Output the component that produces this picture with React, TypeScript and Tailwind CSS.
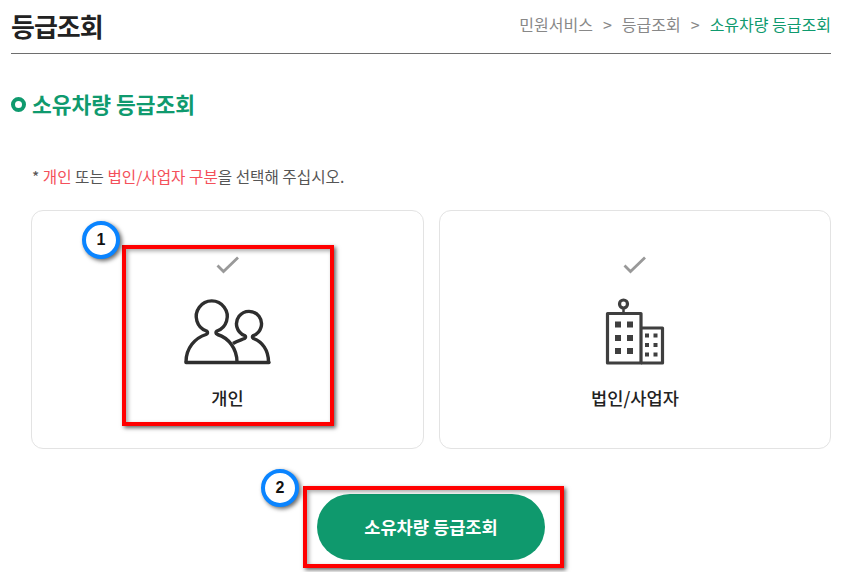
const FONT = "font-['Noto_Sans_CJK_KR','Noto_Sans','Liberation_Sans',sans-serif]";

function Check() {
  return (
    <svg width="24" height="18" viewBox="0 0 24 18" fill="none" className="block">
      <path d="M1.5 9.5 L7.5 15.5 L22 1.5" stroke="#999" strokeWidth="2.8" />
    </svg>
  );
}

function People() {
  return (
    <svg width="88" height="68" viewBox="184 298 88 68" fill="none" stroke="#2e2e2e" strokeWidth="3.4" className="block">
      <path d="M186 362.5 H269" strokeLinecap="round" />
      <path d="M186 362 C186 348 195 338 206 334.5 C208 333.5 208 332 206.5 331 A15.5 15.5 0 1 1 217 331 C215.5 332 215.5 333.5 217.5 334.5 C229 338 237 349 237 362" strokeLinejoin="round" />
      <path d="M233 343.5 C237 341 241 340 244.5 338.5 C246 337.5 246 336.5 244.5 335.5 A12.5 12.5 0 1 1 253.5 335.5 C252 336.5 252 337.5 253.5 338.5 C262 341.5 268.5 350 268.5 362" strokeLinejoin="round" />
    </svg>
  );
}

function Building() {
  return (
    <svg width="60" height="68" viewBox="605 299 60 68" fill="#3f3f3f" className="block">
      <circle cx="623.5" cy="305" r="4" fill="none" stroke="#3f3f3f" strokeWidth="3.2" />
      <path d="M623.5 309 V314" stroke="#3f3f3f" strokeWidth="2.5" />
      <path d="M607.5 364 V314.5 H641 V364 Z" fill="none" stroke="#3f3f3f" strokeWidth="3.2" strokeLinejoin="round" />
      <path d="M641 329 H662.5 V364 H641" fill="none" stroke="#3f3f3f" strokeWidth="3.2" strokeLinejoin="round" />
      <rect x="615" y="322.5" width="6" height="6" />
      <rect x="627" y="322.5" width="6" height="6" />
      <rect x="615" y="336" width="6" height="6" />
      <rect x="627" y="336" width="6" height="6" />
      <rect x="615" y="349" width="6" height="6" />
      <rect x="627" y="349" width="6" height="6" />
      <rect x="645" y="334.5" width="4" height="4" />
      <rect x="653.5" y="334.5" width="4" height="4" />
      <rect x="645" y="344" width="4" height="4" />
      <rect x="653.5" y="344" width="4" height="4" />
      <rect x="645" y="353.5" width="4" height="4" />
      <rect x="653.5" y="353.5" width="4" height="4" />
    </svg>
  );
}

function Card({ label, children }: { label: string; children: React.ReactNode }) {
  return (
    <div className="flex h-[239px] flex-col items-center rounded-[12px] border border-[#e3e3e3] bg-white pt-[45px]">
      <Check />
      <div className="mt-[24px] flex h-[68px] items-center">{children}</div>
      <div className="mt-[19px] text-[17.6px] font-medium leading-[26px] text-[#222]">{label}</div>
    </div>
  );
}

function Badge({ n, className }: { n: string; className: string }) {
  return (
    <div
      className={`absolute flex h-[38px] w-[38px] items-center justify-center rounded-full border-[4px] border-[#0a84ff] bg-white font-['Liberation_Sans',sans-serif] text-[16px] font-bold text-[#111] shadow-[2px_2px_4px_rgba(0,0,0,0.6)] ${className}`}
    >
      {n}
    </div>
  );
}

export default function App() {
  return (
    <div className={`relative h-[572px] w-[847px] overflow-hidden bg-white ${FONT}`}>
      <div className="ml-[11px] mr-[16px] flex h-[54px] items-start justify-between border-b border-[#6e6e6e]">
        <h1 className="mt-[8px] text-[26px] font-bold leading-[36px] tracking-[-1px] text-[#222]">등급조회</h1>
        <div className="mt-[13px] flex gap-[10px] text-[16px] leading-[22px] text-[#888]">
          <span>민원서비스</span>
          <span>&gt;</span>
          <span>등급조회</span>
          <span>&gt;</span>
          <span className="text-[#0f9a6e]">소유차량 등급조회</span>
        </div>
      </div>

      <div className="ml-[11px] mt-[35px] flex h-[30px] items-center gap-[6px]">
        <span className="h-[15px] w-[15px] rounded-full border-[4.5px] border-[#0f9a6e]" />
        <h2 className="text-[21.5px] font-bold leading-[30px] text-[#0f9a6e]">소유차량 등급조회</h2>
      </div>

      <p className="ml-[32px] mt-[47px] text-[15.65px] leading-[22px] text-[#555]">
        * <span className="text-[#f4505a]">개인</span> 또는{" "}
        <span className="text-[#f4505a]">법인/사업자 구분</span>을 선택해 주십시오.
      </p>

      <div className="ml-[31px] mr-[16px] mt-[22px] grid grid-cols-[393px_392px] gap-[15px]">
        <Card label="개인">
          <People />
        </Card>
        <Card label="법인/사업자">
          <Building />
        </Card>
      </div>

      <div className="ml-[317px] mt-[45px] flex h-[66px] w-[228px] items-center justify-center rounded-full bg-[#0f996d] text-[17.6px] font-bold text-white">
        소유차량 등급조회
      </div>

      <div className="absolute left-[122px] top-[245px] h-[181px] w-[212px] border-[4px] border-[#ff0000] shadow-[2px_2px_4px_rgba(0,0,0,0.6),inset_2px_2px_4px_rgba(0,0,0,0.35)]" />
      <div className="absolute left-[303px] top-[486px] h-[82px] w-[261px] border-[4px] border-[#ff0000] shadow-[2px_2px_4px_rgba(0,0,0,0.6),inset_2px_2px_4px_rgba(0,0,0,0.35)]" />
      <Badge n="1" className="left-[82px] top-[221px]" />
      <Badge n="2" className="left-[261px] top-[469px]" />
    </div>
  );
}
